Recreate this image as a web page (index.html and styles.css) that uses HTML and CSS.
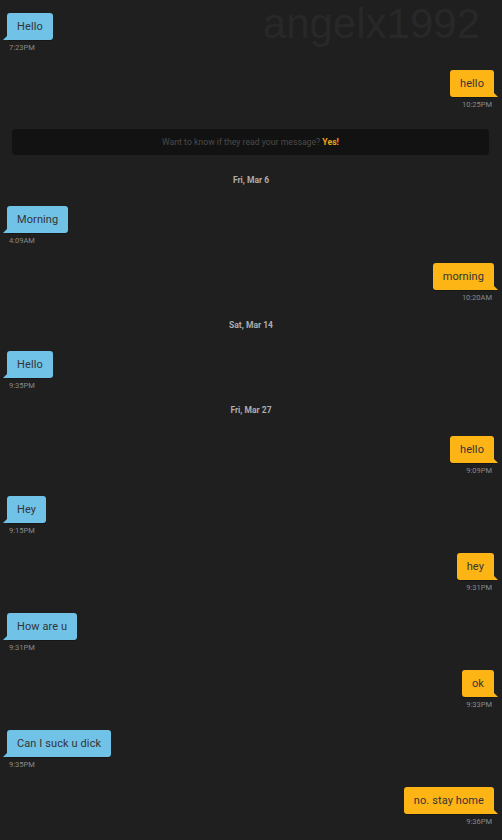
FILE: index.html
```html
<!DOCTYPE html>
<html lang="en">
<head>
    <meta charset="UTF-8">
    <meta name="viewport" content="width=device-width, initial-scale=1.0">
    <title>Chat - angelx1992</title>
    <link rel="stylesheet" href="styles.css">
</head>
<body>
    <div class="chat">
        <div class="watermark">angelx1992</div>

        <div class="msg them">
            <div class="bubble">Hello</div>
            <div class="time">7:23PM</div>
        </div>
        <div class="msg me">
            <div class="bubble">hello</div>
            <div class="time">10:25PM</div>
        </div>

        <div class="banner">Want to know if they read your message? <span class="yes">Yes!</span></div>

        <div class="date">Fri, Mar 6</div>
        <div class="msg them">
            <div class="bubble">Morning</div>
            <div class="time">4:09AM</div>
        </div>
        <div class="msg me">
            <div class="bubble">morning</div>
            <div class="time">10:20AM</div>
        </div>

        <div class="date">Sat, Mar 14</div>
        <div class="msg them">
            <div class="bubble">Hello</div>
            <div class="time">9:35PM</div>
        </div>

        <div class="date">Fri, Mar 27</div>
        <div class="msg me">
            <div class="bubble">hello</div>
            <div class="time">9:09PM</div>
        </div>
        <div class="msg them">
            <div class="bubble">Hey</div>
            <div class="time">9:15PM</div>
        </div>
        <div class="msg me">
            <div class="bubble">hey</div>
            <div class="time">9:31PM</div>
        </div>
        <div class="msg them">
            <div class="bubble">How are u</div>
            <div class="time">9:31PM</div>
        </div>
        <div class="msg me">
            <div class="bubble">ok</div>
            <div class="time">9:33PM</div>
        </div>
        <div class="msg them">
            <div class="bubble">Can I suck u dick</div>
            <div class="time">9:35PM</div>
        </div>
        <div class="msg me">
            <div class="bubble">no. stay home</div>
            <div class="time">9:36PM</div>
        </div>
    </div>
</body>
</html>
```

FILE: styles.css
```css
:root {
    --background: #1f1f1f;
    --blue: #70c2e7;
    --orange: #fdb516;
    --time: #8a8a8a;
}

* {
    box-sizing: border-box;
    margin: 0;
    padding: 0;
}

html, body {
    height: 100%;
    overflow: hidden;
}

body {
    font-family: Roboto, 'Liberation Sans', sans-serif;
    background-color: var(--background);
}

.chat {
    position: relative;
    padding-top: 13px;
}

.watermark {
    position: absolute;
    top: 3px;
    right: 22px;
    font-family: 'Liberation Sans', Arial, sans-serif;
    font-size: 42px;
    line-height: 1;
    color: #282828;
}

.msg {
    position: relative;
    display: flex;
    flex-direction: column;
}

.msg.them {
    align-items: flex-start;
    padding-left: 7px;
    margin-bottom: 16px;
}

.msg.me {
    align-items: flex-end;
    padding-right: 8px;
    margin-bottom: 19px;
}

.msg:last-child {
    margin-bottom: 0;
}

.bubble {
    position: relative;
    height: 27px;
    line-height: 27px;
    padding: 0 10px;
    font-size: 11px;
    letter-spacing: 0.1px;
    color: #343434;
    border-radius: 3px;
    box-shadow: 0 1px 0 rgba(0, 0, 0, 0.25);
}

.them .bubble {
    background-color: var(--blue);
    border-bottom-left-radius: 0;
}

.me .bubble {
    background-color: var(--orange);
    border-bottom-right-radius: 0;
}

/* little tail at the bottom corner */
.bubble::after {
    content: "";
    position: absolute;
    bottom: 0;
    width: 0;
    height: 0;
    border-bottom: 4px solid transparent;
}

.them .bubble::after {
    left: -4px;
    border-left: 4px solid transparent;
    border-bottom-color: var(--blue);
}

.me .bubble::after {
    right: -4px;
    border-right: 4px solid transparent;
    border-bottom-color: var(--orange);
}

.time {
    margin-top: 2px;
    height: 12px;
    line-height: 12px;
    font-size: 7.5px;
    color: var(--time);
    padding: 0 2px;
}

.banner {
    margin: -1px 13px 23px 12px;
    height: 26px;
    line-height: 26px;
    background-color: #121212;
    border-radius: 4px;
    text-align: center;
    font-size: 8.7px;
    color: #4a4a4a;
}

.banner .yes {
    color: #e9a416;
    font-weight: 700;
}

.date {
    margin: -4px 0 20px;
    height: 12px;
    line-height: 12px;
    text-align: center;
    font-size: 8.5px;
    font-weight: 700;
    color: #adadad;
}
```
